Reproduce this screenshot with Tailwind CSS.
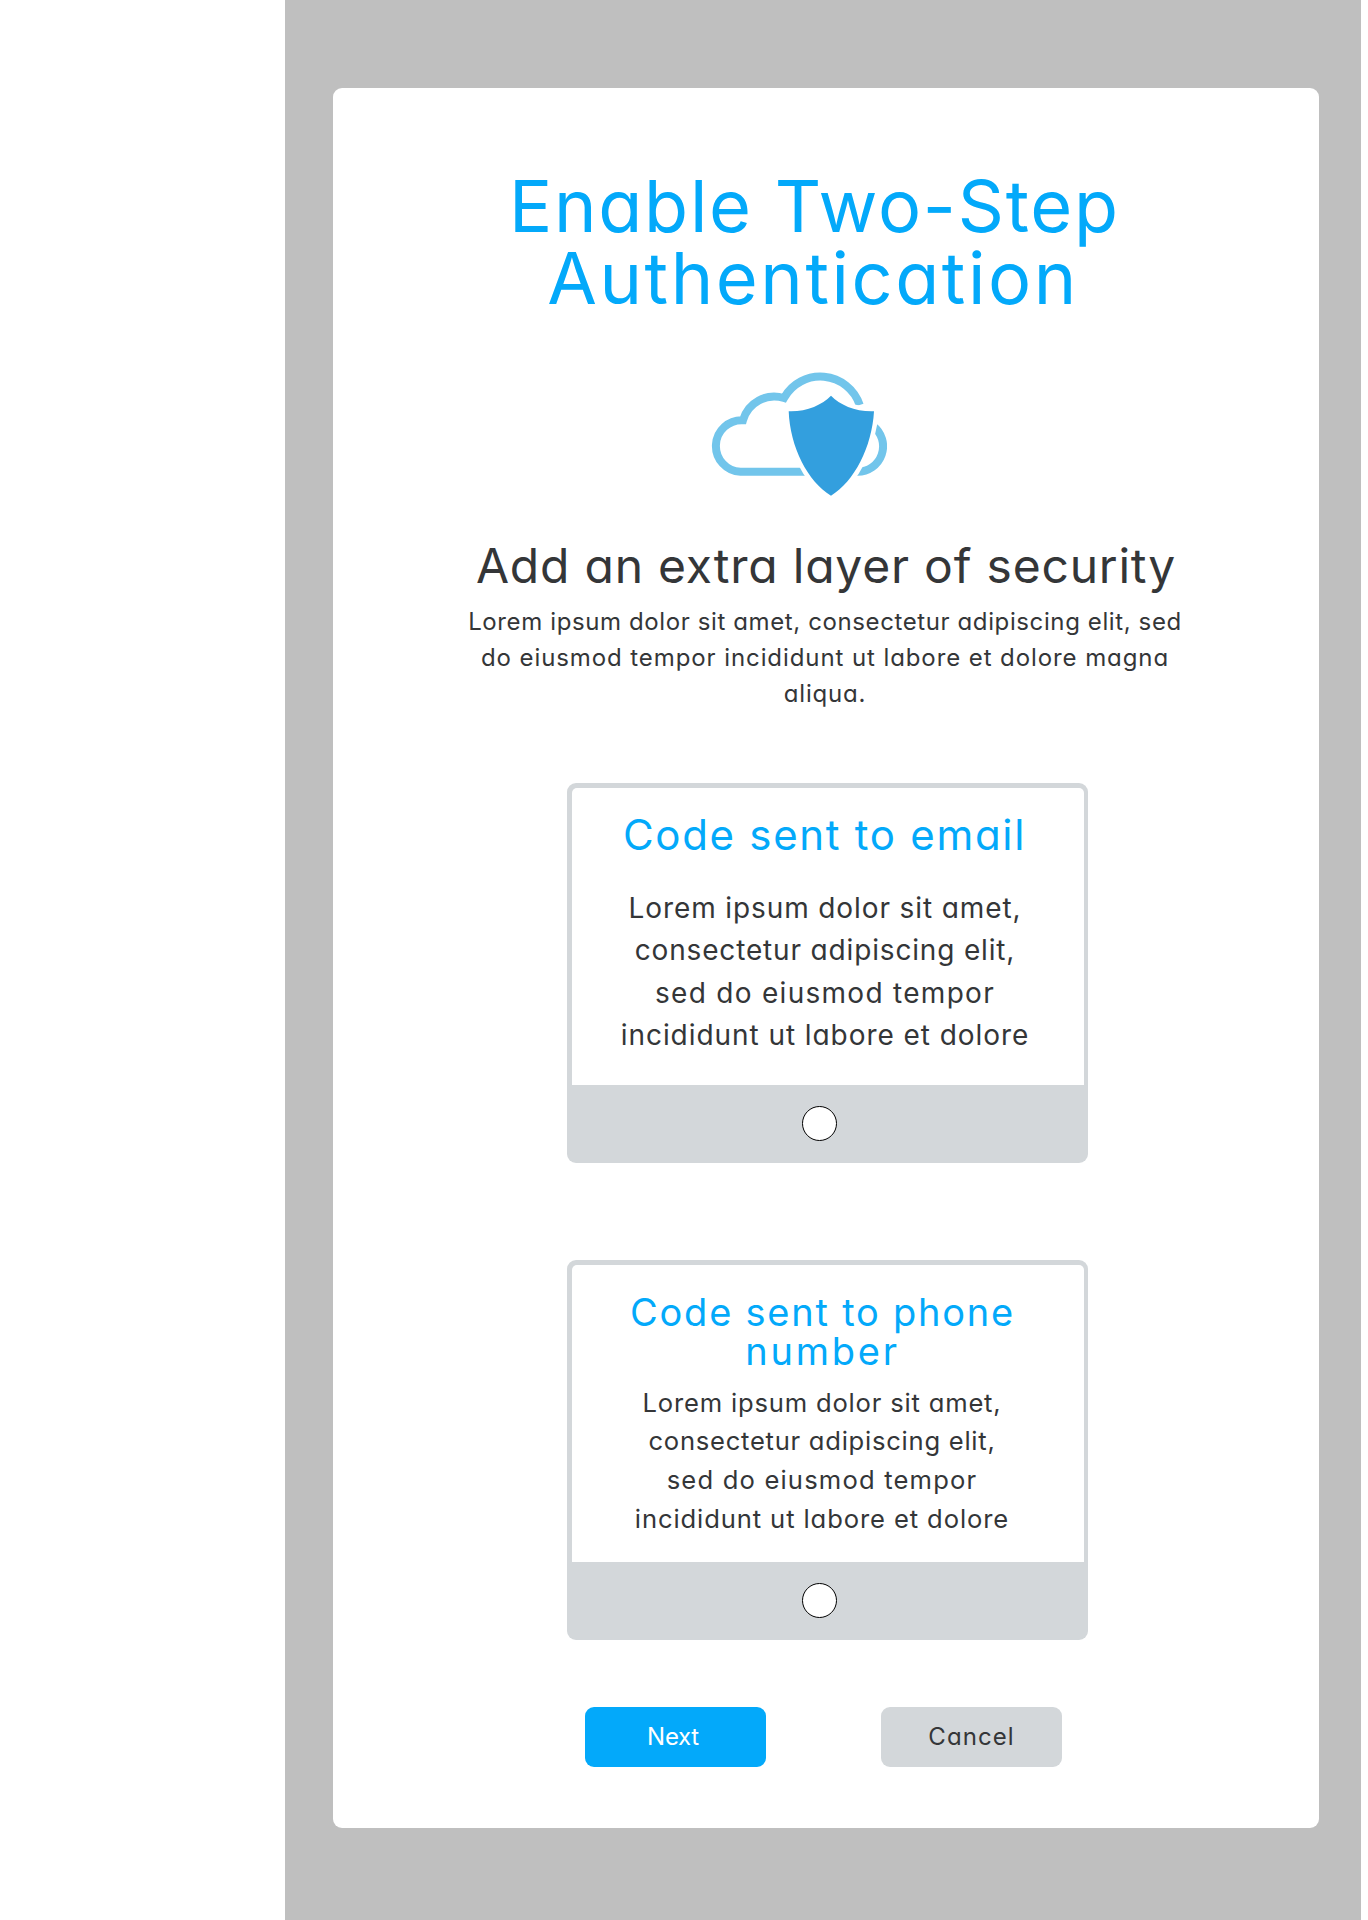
<!DOCTYPE html>
<html lang="en"><head><meta charset="utf-8"><title>Enable Two-Step Authentication</title>
<script src="https://cdn.jsdelivr.net/npm/@tailwindcss/browser@4"></script></head>
<body class="bg-white font-['Inter',sans-serif] text-[#343638] [font-feature-settings:'cv11']">
<div class="ml-[285px] w-[1076px] h-[1920px] bg-[#bfbfbf] pt-[88px] pl-[48px]">
<main class="w-[986px] h-[1740px] bg-white rounded-[9px] pt-[82px] flex flex-col items-center text-center whitespace-nowrap">
<h1 class="text-[72px] leading-[72px] text-[#03a9fa] mr-[25px] flex flex-col items-center">
<span class="tracking-[1.75px] -mr-[1.75px]">Enable Two-Step</span>
<span class="tracking-[2.55px] mr-[1px]">Authentication</span></h1>
<svg class="mt-[58px] mr-[54px] w-[176px] h-[124px]" viewBox="0 0 176 124" fill="none" aria-hidden="true">
<path d="M100 99.8H29.5A25.7 25.7 0 1 1 32 48.2A32.5 32.5 0 0 1 73 26A41.5 41.5 0 0 1 148.7 33M162 54A25.5 25.5 0 0 1 146 99.8" stroke="#72c5eb" stroke-width="8"/>
<path d="M120 23.7C111 33 95 40 77.7 39.3C79 75 97 110 120 123.7C143 110 161 75 163 39.3C145 40 129 33 120 23.7Z" fill="#339fde" stroke="white" stroke-width="9" paint-order="stroke"/></svg>
<h2 class="mt-[46px] text-[48px] leading-[48px] tracking-[0.79px]">Add an extra layer of security</h2>
<p class="mt-[14px] text-[24px] leading-[36px] mr-[2px] flex flex-col items-center">
<span class="tracking-[0.61px]">Lorem ipsum dolor sit amet, consectetur adipiscing elit, sed</span>
<span class="tracking-[0.91px]">do eiusmod tempor incididunt ut labore et dolore magna</span>
<span class="tracking-[0.8px]">aliqua.</span></p>

<section class="mt-[71px] ml-[3px] w-[521px] h-[380px] bg-[#d3d7da] rounded-[9px] px-[4.5px] pt-[5px]">
<div class="h-[297px] bg-white rounded-t-[5px] pt-[26px] flex flex-col items-center">
<h3 class="text-[42px] leading-[42px] text-[#03a9fa] mr-[6px] tracking-[1.7px]">Code sent to email</h3>
<p class="mt-[30.7px] text-[28px] leading-[42.4px] mr-[5px] flex flex-col items-center">
<span class="tracking-[0.89px]">Lorem ipsum dolor sit amet,</span>
<span class="tracking-[0.84px]">consectetur adipiscing elit,</span>
<span class="tracking-[1.29px]">sed do eiusmod tempor</span>
<span class="tracking-[0.94px]">incididunt ut labore et dolore</span></p></div>
<div class="flex justify-center pt-[21px] pr-[16px]"><span class="size-[35px] rounded-full border border-black bg-white"></span></div></section>

<section class="mt-[97px] ml-[3px] w-[521px] h-[380px] bg-[#d3d7da] rounded-[9px] px-[4.5px] pt-[5px]">
<div class="h-[297px] bg-white rounded-t-[5px] pt-[28px] flex flex-col items-center">
<h3 class="text-[38px] leading-[39px] text-[#03a9fa] mr-[10px] flex flex-col items-center">
<span class="tracking-[1.77px]">Code sent to phone</span>
<span class="tracking-[2.8px]">number</span></h3>
<p class="mt-[12.5px] text-[25.6px] leading-[38.7px] mr-[11px] flex flex-col items-center">
<span class="tracking-[0.81px]">Lorem ipsum dolor sit amet,</span>
<span class="tracking-[0.74px]">consectetur adipiscing elit,</span>
<span class="tracking-[1.17px]">sed do eiusmod tempor</span>
<span class="tracking-[0.89px]">incididunt ut labore et dolore</span></p></div>
<div class="flex justify-center pt-[21px] pr-[16px]"><span class="size-[35px] rounded-full border border-black bg-white"></span></div></section>

<div class="mt-[67px] flex gap-[115px] text-[24px] leading-[60px] mr-[5px]">
<button class="w-[181px] h-[60px] rounded-[9px] bg-[#03a9fa] text-white pr-[5px] tracking-[-0.3px]">Next</button>
<button class="w-[181px] h-[60px] rounded-[9px] bg-[#d3d7da] tracking-[1.07px]">Cancel</button></div>
</main></div>
</body></html>
